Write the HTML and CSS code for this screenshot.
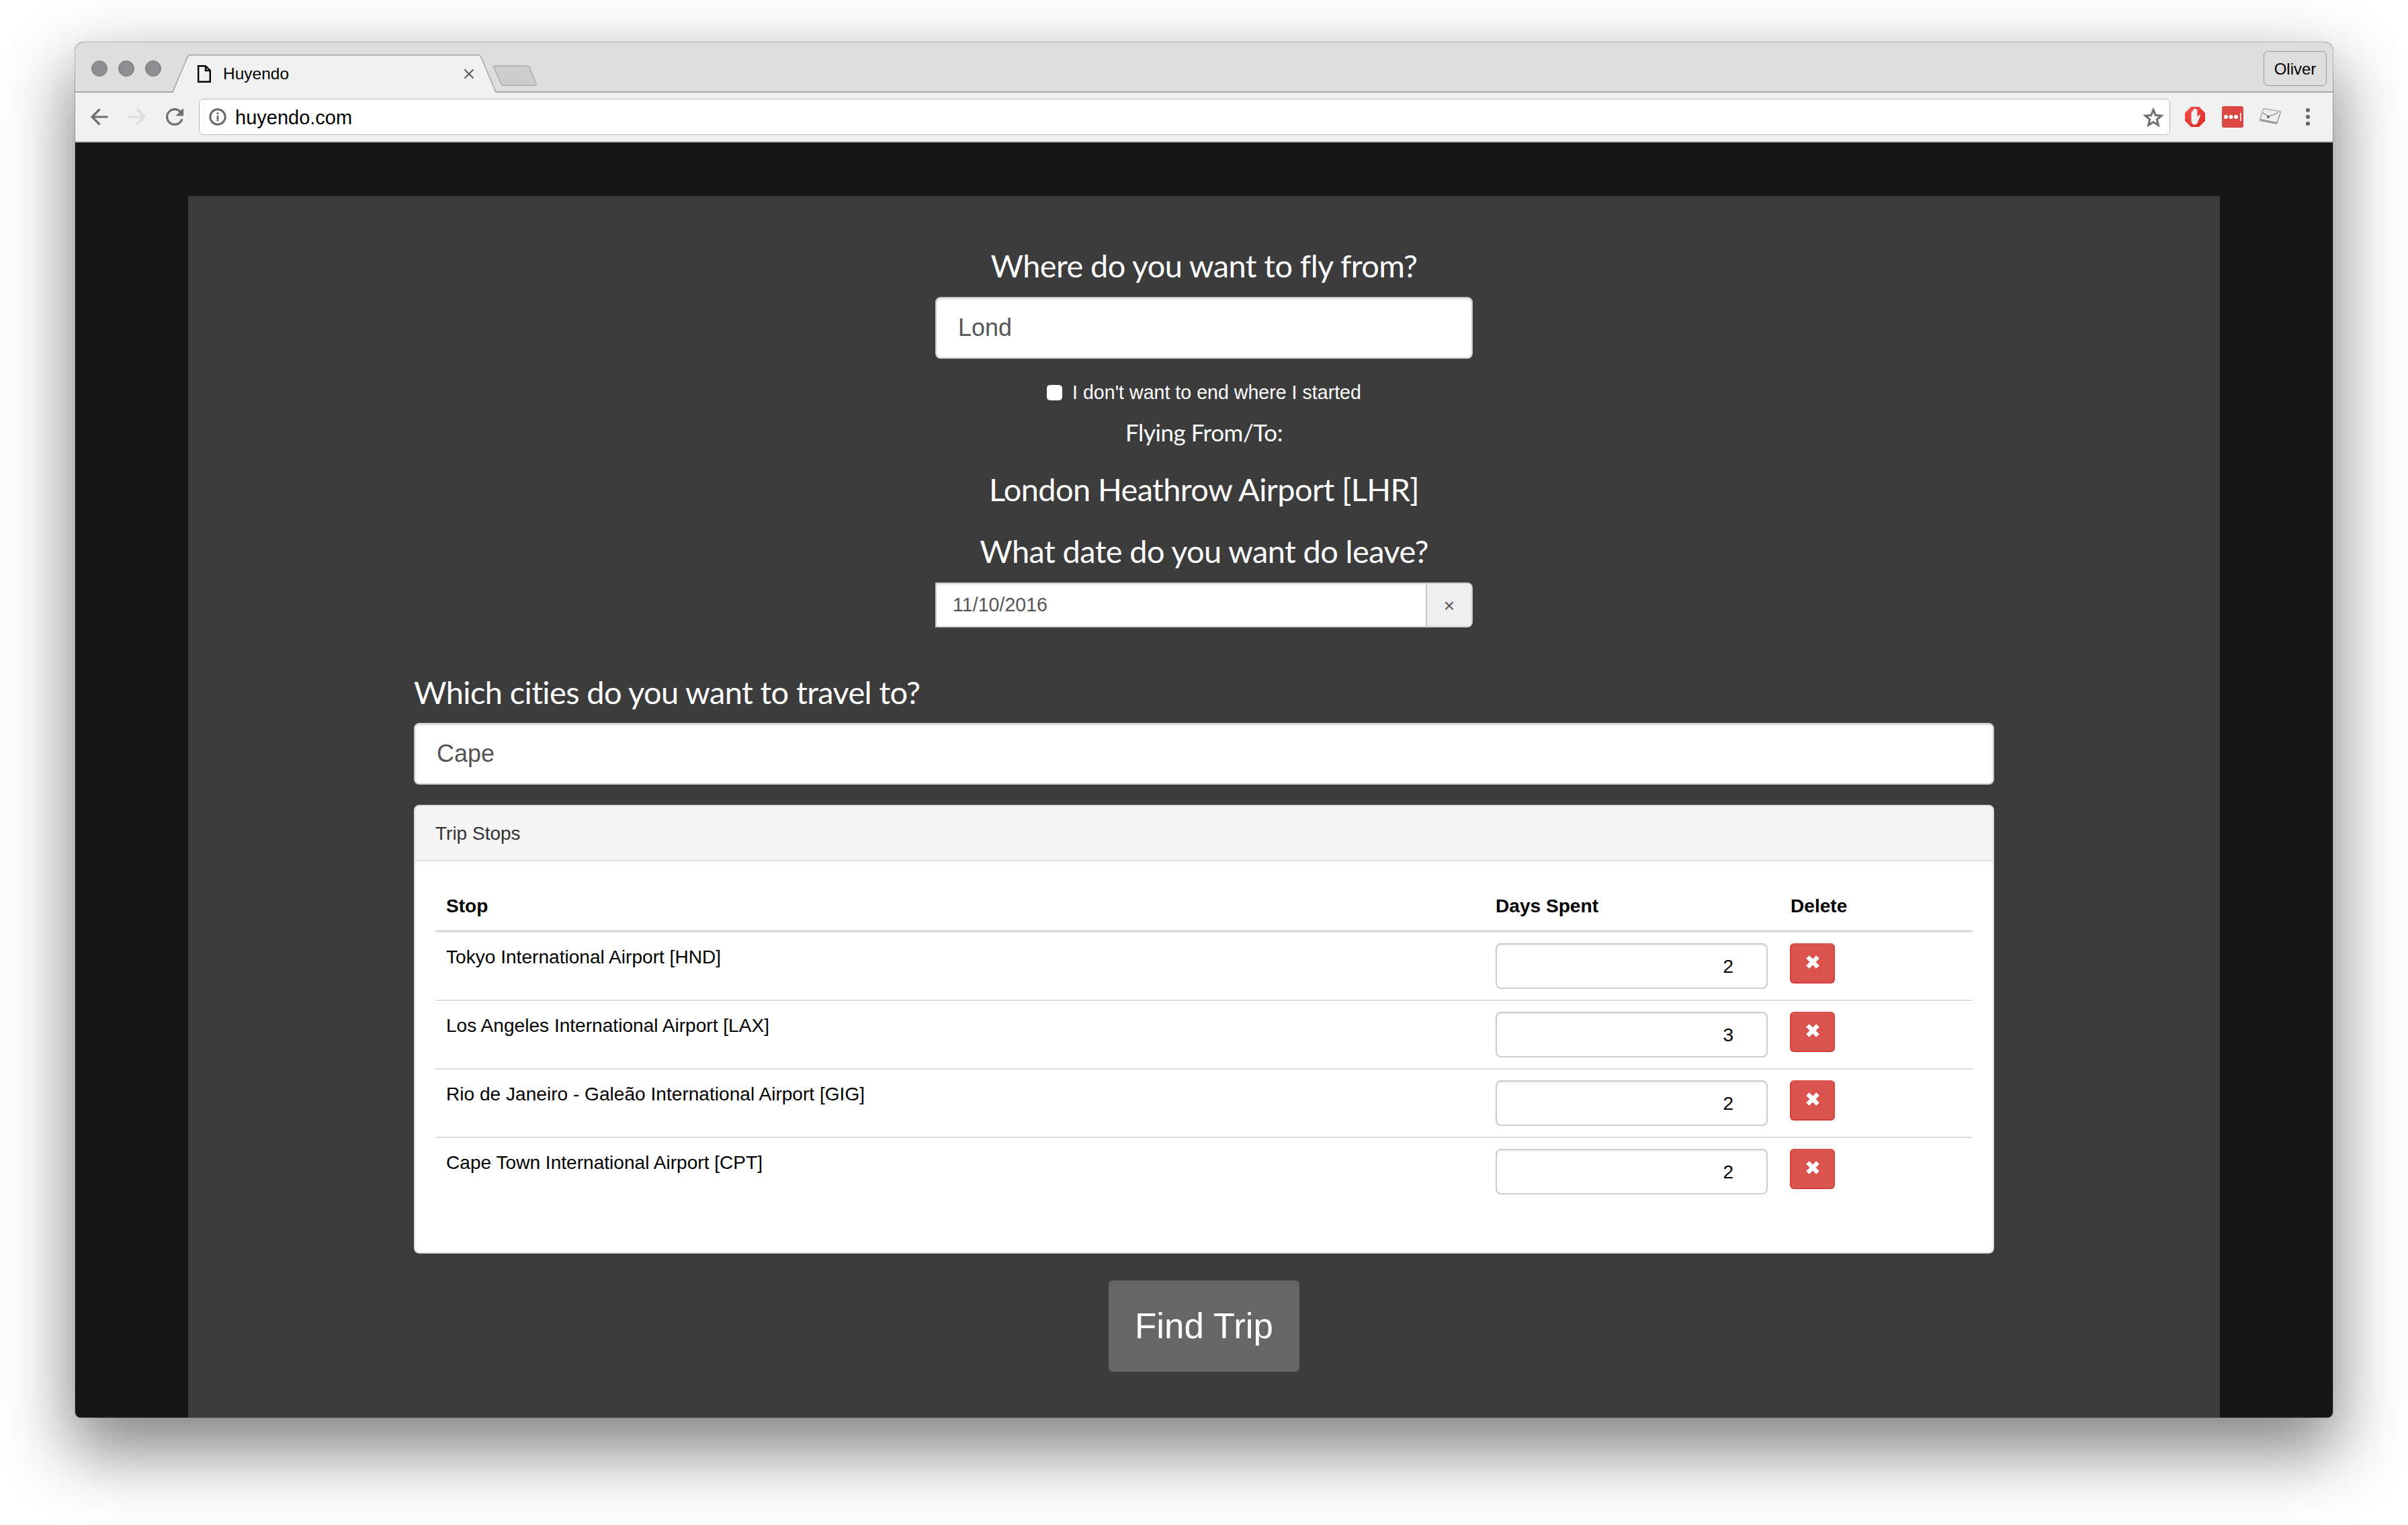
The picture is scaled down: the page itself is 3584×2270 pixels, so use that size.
FILE: index.html
```html
<!DOCTYPE html>
<html lang="en">
<head>
<meta charset="utf-8">
<title>Huyendo</title>
<link rel="stylesheet" href="styles.css">
</head>
<body>
<div class="window">
  <div class="tabstrip">
    <div class="lights"><span class="light"></span><span class="light"></span><span class="light"></span></div>
    <div class="tab">
      <svg class="tab-shape" viewBox="0 0 483 57" width="483" height="57"><path d="M0 57 L1 56 L23 4 Q24.500 1 27 1 L456 1 Q458.500 1 460 4 L482 56 L483 57 Z" fill="#f1f1f1"/><path d="M0 56 L1 56 L23 4 Q24.500 1 27 1 L456 1 Q458.500 1 460 4 L482 56 L483 56" fill="none" stroke="#a4a4a4" stroke-width="1.500"/></svg>
      <svg class="file-icon" viewBox="0 0 20 26" width="20" height="26"><path d="M1.200 1.200 H12 L18.800 8 V24.800 H1.200 Z M12 1.200 V8 H18.800" fill="none" stroke="#000" stroke-width="2.400"/></svg>
      <span class="tab-title">Huyendo</span>
      <svg class="tab-close" viewBox="0 0 16 16" width="16" height="16"><path d="M1.500 1.500 L14.500 14.500 M14.500 1.500 L1.500 14.500" stroke="#5a5a5a" stroke-width="2" fill="none"/></svg>
    </div>
    <svg class="newtab" viewBox="0 0 65 31" width="65" height="31"><path d="M3 1 H51 Q53 1 54 3 L64 28 Q65 30 62 30 H15 Q13 30 12 28 L1 3 Q0.500 1 3 1 Z" fill="#cdcdcd" stroke="#a9a9a9" stroke-width="1.500"/></svg>
    <div class="profile">Oliver</div>
  </div>
  <div class="toolbar">
    <svg class="nav" viewBox="0 0 26 26" width="26" height="26"><path d="M25.500 13 H2.500 M13.500 1.500 L2 13 L13.500 24.500" fill="none" stroke="#6f6f6f" stroke-width="3.200"/></svg>
    <svg class="nav" viewBox="0 0 26 26" width="26" height="26"><path d="M0.500 13 H23.500 M12.500 1.500 L24 13 L12.500 24.500" fill="none" stroke="#dcdcdc" stroke-width="3.200"/></svg>
    <svg class="nav" viewBox="4 4 16 16" width="26" height="26"><path d="M17.650 6.350A7.958 7.958 0 0 0 12 4c-4.420 0-7.990 3.580-7.990 8s3.570 8 7.990 8c3.730 0 6.840-2.550 7.730-6h-2.080A5.990 5.990 0 0 1 12 18c-3.310 0-6-2.690-6-6s2.690-6 6-6c1.660 0 3.140.690 4.220 1.780L13 11h7V4l-2.350 2.350z" fill="#6f6f6f"/></svg>
    <div class="omnibox">
      <svg class="info" viewBox="0 0 26 26" width="26" height="26"><circle cx="13" cy="13" r="11.200" fill="none" stroke="#6a6a6a" stroke-width="3"/><rect x="11.600" y="11" width="2.800" height="8.500" fill="#6a6a6a"/><rect x="11.600" y="6.500" width="2.800" height="2.800" fill="#6a6a6a"/></svg>
      <span class="url">huyendo.com</span>
      <svg class="star" viewBox="0 0 30 29" width="30" height="29"><path d="M15 3.500 L18.300 11.600 L27 12.200 L20.300 17.800 L22.400 26.300 L15 21.700 L7.600 26.300 L9.700 17.800 L3 12.200 L11.700 11.600 Z" fill="none" stroke="#6f6f6f" stroke-width="3"/></svg>
    </div>
    <svg class="ext ext-adblock" viewBox="0 0 30 30" width="30" height="30"><defs><linearGradient id="abp" x1="0" y1="0" x2="1" y2="1"><stop offset="0" stop-color="#f5514f"/><stop offset="1" stop-color="#d92a20"/></linearGradient></defs><path d="M9 0 H21 L30 9 V21 L21 30 H9 L0 21 V9 Z" fill="url(#abp)"/><path d="M9.500 14 V8 Q9.500 6.800 10.600 6.800 Q11.600 6.800 11.600 8 V5 Q11.600 3.800 12.700 3.800 Q13.800 3.800 13.800 5 V3.500 Q13.800 2.200 15 2.200 Q16.200 2.200 16.200 3.500 V5 Q16.200 3.800 17.300 3.800 Q18.400 3.800 18.400 5 V15 L20.800 12.500 Q22.200 11.500 23.300 12.500 L19.800 21 Q18.500 26.500 14.500 26.500 Q9.500 26.500 9.500 20 Z" fill="#f1f1f1"/></svg>
    <svg class="ext ext-lastpass" viewBox="0 0 32 32" width="32" height="32"><rect width="32" height="32" rx="3" fill="#db4744"/><circle cx="6" cy="16" r="3" fill="#fff"/><circle cx="13.500" cy="16" r="3" fill="#fff"/><circle cx="21" cy="16" r="3" fill="#fff"/><rect x="27" y="10" width="1.500" height="12" fill="#fff"/></svg>
    <svg class="ext ext-chart" viewBox="0 0 32 26" width="32" height="26"><path d="M6 1 L32 6 L26 24 L0 19 Z" fill="#9a9a9a"/><path d="M6 0.500 L31.500 5 L26 21.500 L0.500 16.500 Z" fill="#eeeeee" stroke="#8c8c8c"/><path d="M5 7 L13 12 L22 9.500 L28 6" fill="none" stroke="#666" stroke-width="1"/><circle cx="13" cy="13" r="2" fill="#666"/></svg>
    <div class="menu-dots"><span class="dot"></span><span class="dot"></span><span class="dot"></span></div>
  </div>
  <div class="stage">
    <div class="sheet">
      <div class="content">
        <div class="narrow">
          <h3 class="title title-first">Where do you want to fly from?</h3>
          <div class="field">Lond</div>
          <div class="check-row"><span class="checkbox"></span><span class="check-label">I don't want to end where I started</span></div>
          <p class="title-small">Flying From/To:</p>
          <h3 class="title title-place">London Heathrow Airport [LHR]</h3>
          <h3 class="title title-date">What date do you want do leave?</h3>
          <div class="date-group"><div class="date-value">11/10/2016</div><div class="date-addon">×</div></div>
        </div>
        <h3 class="title title-cities">Which cities do you want to travel to?</h3>
        <div class="field">Cape</div>
        <div class="panel">
          <div class="panel-heading">Trip Stops</div>
          <div class="panel-body">
            <table class="stops">
              <colgroup><col class="col-stop"><col class="col-days"><col class="col-del"></colgroup>
              <thead><tr><th>Stop</th><th>Days Spent</th><th>Delete</th></tr></thead>
              <tbody>
                <tr><td>Tokyo International Airport [HND]</td><td><div class="num">2</div></td><td><div class="del"><svg viewBox="0 0 22 20" width="22" height="20"><path d="M3.500 2.500 L18.500 17.500 M18.500 2.500 L3.500 17.500" stroke="#fff" stroke-width="6.500" fill="none"/></svg></div></td></tr>
                <tr><td>Los Angeles International Airport [LAX]</td><td><div class="num">3</div></td><td><div class="del"><svg viewBox="0 0 22 20" width="22" height="20"><path d="M3.500 2.500 L18.500 17.500 M18.500 2.500 L3.500 17.500" stroke="#fff" stroke-width="6.500" fill="none"/></svg></div></td></tr>
                <tr><td>Rio de Janeiro - Galeão International Airport [GIG]</td><td><div class="num">2</div></td><td><div class="del"><svg viewBox="0 0 22 20" width="22" height="20"><path d="M3.500 2.500 L18.500 17.500 M18.500 2.500 L3.500 17.500" stroke="#fff" stroke-width="6.500" fill="none"/></svg></div></td></tr>
                <tr><td>Cape Town International Airport [CPT]</td><td><div class="num">2</div></td><td><div class="del"><svg viewBox="0 0 22 20" width="22" height="20"><path d="M3.500 2.500 L18.500 17.500 M18.500 2.500 L3.500 17.500" stroke="#fff" stroke-width="6.500" fill="none"/></svg></div></td></tr>
              </tbody>
            </table>
          </div>
        </div>
        <div class="actions"><div class="find">Find Trip</div></div>
      </div>
    </div>
  </div>
</div>
</body>
</html>
```

FILE: styles.css
```css
* { box-sizing: border-box; }
html, body { margin: 0; background: #fff; }
body { padding: 63px 112px 160px; font-family: "Liberation Sans", Arial, sans-serif; color: #000; }

.window {
  width: 3360px; height: 2047px; display: flex; flex-direction: column; overflow: hidden;
  border-radius: 12px 12px 8px 8px; background: #161616;
  box-shadow: 0 0 0 1px rgba(0,0,0,.22), 0 44px 100px 8px rgba(0,0,0,.48);
}

.tabstrip { height: 75px; flex: none; display: flex; align-items: flex-end; background: #dedede; border-bottom: 2px solid #a9a9a9; padding-left: 24px; }
.lights { display: flex; gap: 16px; align-self: flex-start; margin-top: 27px; }
.light { width: 24px; height: 24px; border-radius: 50%; background: #8f8d91; border: 1px solid #78767a; }
.tab { position: relative; width: 483px; height: 57px; margin-left: 16px; margin-bottom: -2px; display: flex; align-items: center; padding: 0 33px 0 38px; }
.tab-shape { position: absolute; left: 0; top: 0; }
.file-icon { position: relative; flex: none; }
.tab-title { position: relative; margin-left: 18px; font-size: 24.500px; line-height: 30px; }
.tab-close { position: relative; margin-left: auto; flex: none; }
.newtab { flex: none; margin-left: -5px; margin-bottom: 8px; }
.profile { margin-left: auto; margin-right: 9px; margin-bottom: 8px; width: 94px; height: 52px; border: 1.500px solid #9c9c9c; border-radius: 7px; font-size: 24px; line-height: 51px; text-align: center; }

.toolbar { height: 74px; flex: none; display: flex; align-items: center; background: #f1f1f1; border-bottom: 2px solid #bdbdbd; padding-left: 23px; }
.nav { flex: none; margin-right: 30px; }
.nav:nth-child(3) { margin-right: 23px; }
.omnibox { width: 2934px; height: 54px; flex: none; display: flex; align-items: center; background: #fff; border: 1.500px solid #b4b4b4; border-radius: 7px; padding: 0 9px 0 14px; }
.info { flex: none; }
.url { margin-left: 13px; font-size: 29px; line-height: 36px; padding-top: 1px; }
.star { margin-left: auto; flex: none; }
.ext { flex: none; }
.ext-adblock { margin-left: 22px; }
.ext-lastpass { margin-left: 25px; }
.ext-chart { margin-left: 24px; }
.menu-dots { margin-left: 37px; display: flex; flex-direction: column; gap: 4px; }
.dot { width: 6px; height: 6px; border-radius: 50%; background: #666; }

.stage { flex: 1; padding-top: 80px; min-height: 0; display: flex; justify-content: center; }
.sheet { width: 3024px; background: #3c3c3c; }
.content { width: 2352px; margin: 0 auto; padding-top: 74px; }
.narrow { width: 800px; margin: 0 auto; display: flex; flex-direction: column; align-items: center; }

.title { margin: 0; font-family: Lato, sans-serif; font-weight: 400; font-size: 47px; line-height: 58px; letter-spacing: -0.650px; color: #fff; white-space: nowrap; }
.title-first { margin-bottom: 18px; }
.title-place { margin-top: 33px; }
.title-date { margin-top: 34px; margin-bottom: 18px; }
.title-cities { margin-top: 67px; margin-bottom: 17px; }
.title-small { margin: 16px 0 0; font-family: Lato, sans-serif; font-size: 35px; line-height: 46px; letter-spacing: -0.450px; color: #fff; }

.field { width: 100%; height: 92px; background: #fff; border: 2px solid #ccc; border-radius: 8px; padding: 0 32px; font-size: 36px; line-height: 88px; color: #555; box-shadow: inset 0 2px 2px rgba(0,0,0,.08); }

.check-row { height: 40px; margin-top: 30px; display: flex; align-items: center; gap: 15px; color: #fff; }
.checkbox { width: 23px; height: 23px; background: #fff; border-radius: 5px; }
.check-label { font-size: 28.600px; line-height: 40px; }

.date-group { width: 100%; height: 67px; display: flex; background: #fff; border: 2px solid #ccc; border-radius: 0 8px 8px 0; }
.date-value { flex: 1; padding-left: 24px; font-size: 28.600px; line-height: 62px; color: #555; box-shadow: inset 0 2px 2px rgba(0,0,0,.08); }
.date-addon { width: 68px; flex: none; background: #eee; border-left: 2px solid #ccc; border-radius: 0 6px 6px 0; text-align: center; font-size: 28px; line-height: 66px; color: #555; }

.panel { margin-top: 30px; background: #fff; border: 2px solid #ddd; border-radius: 8px; overflow: hidden; }
.panel-heading { height: 82px; padding-left: 30px; background: #f5f5f5; border-bottom: 2px solid #ddd; font-size: 28px; line-height: 82px; color: #333; }
.panel-body { padding: 30px 30px 70px; }
.stops { width: 2288px; table-layout: fixed; border-collapse: separate; border-spacing: 0; font-size: 28.100px; line-height: 41px; }
.col-stop { width: 1562px; }
.col-days { width: 439px; }
.col-del { width: 287px; }
.stops th { padding: 16px 16px 15px; text-align: left; font-weight: 700; border-bottom: 4px solid #ddd; }
.stops td { padding: 16px; vertical-align: top; }
.stops tbody tr + tr td { border-top: 2px solid #ddd; }
.num { width: 405px; height: 68px; border: 2px solid #ccc; border-radius: 8px; background: #fff; padding-right: 49px; text-align: right; line-height: 65px; box-shadow: inset 0 2px 2px rgba(0,0,0,.06); }
.del { width: 67px; height: 60px; margin-left: -1px; display: flex; align-items: flex-start; justify-content: center; padding-top: 16px; background: #d9534f; border: 2px solid #d43f3a; border-top-color: #d9534f; border-radius: 6px; }

.actions { margin-top: 40px; display: flex; justify-content: center; }
.find { width: 284px; height: 136px; background: #666; border-radius: 6px; color: #fff; font-size: 53px; line-height: 136px; text-align: center; }
```
